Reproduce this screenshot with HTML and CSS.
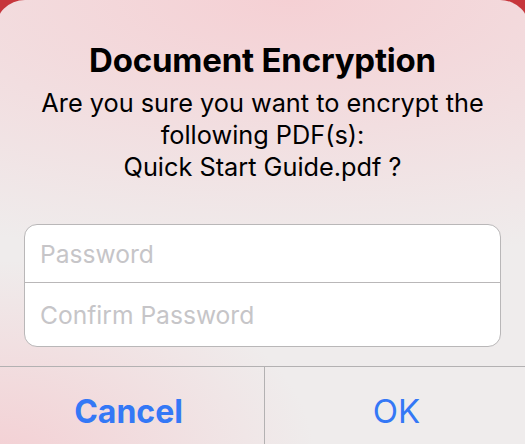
FILE: index.html
```html
<!DOCTYPE html>
<html lang="en">
<head>
<meta charset="utf-8">
<title>Document Encryption</title>
<link rel="stylesheet" href="styles.css">
</head>
<body>
<div class="alert">
  <div class="content">
    <h1 class="title">Document Encryption</h1>
    <p class="message">Are you sure you want to encrypt the following PDF(s):<br>Quick Start Guide.pdf ?</p>
  </div>
  <div class="fields">
    <div class="field"><span class="placeholder">Password</span></div>
    <div class="field"><span class="placeholder">Confirm Password</span></div>
  </div>
  <div class="actions">
    <div class="action action-cancel">Cancel</div>
    <div class="action action-ok">OK</div>
  </div>
</div>
</body>
</html>
```
FILE: styles.css
```css
html, body {
  margin: 0;
  padding: 0;
  height: 100%;
  overflow: hidden;
}
body {
  background: #c7363c;
  font-family: Inter, "Noto Sans", "Liberation Sans", sans-serif;
}
.alert {
  margin: 0 -5px;
  height: 460px;
  border-radius: 30px 30px 0 0;
  background:
    radial-gradient(ellipse 320px 200px at 0% 100%, rgba(244, 206, 210, 0.95), rgba(244, 206, 210, 0) 100%),
    radial-gradient(ellipse 700px 260px at 55% 0%, rgba(245, 208, 212, 1), rgba(245, 208, 212, 0) 100%),
    #efecec;
  display: flex;
  flex-direction: column;
  padding: 0 5px;
  box-sizing: border-box;
}
.content {
  padding-top: 40px;
  text-align: center;
  color: #000;
}
.title {
  margin: 0;
  font-size: 33px;
  line-height: 40px;
  font-weight: 700;
  letter-spacing: -0.2px;
}
.message {
  margin: 7px 10px 0;
  font-size: 25.3px;
  line-height: 32px;
  font-weight: 400;
}
.fields {
  margin: 41px 24px 0;
  background: #fff;
  border: 1px solid #b9b7b8;
  border-radius: 13px;
  overflow: hidden;
}
.field {
  height: 57px;
  display: flex;
  align-items: center;
  padding-left: 15px;
  font-size: 24.6px;
  color: #c6c5c8;
}
.field + .field {
  border-top: 1px solid #b9b7b8;
  height: 63px;
}
.actions {
  margin-top: 19px;
  border-top: 1px solid #b3b1b2;
  display: grid;
  grid-template-columns: 265px 1fr;
  height: 88px;
}
.action {
  display: flex;
  align-items: center;
  justify-content: center;
  font-size: 33px;
  color: #3478f6;
}
.action-cancel {
  font-weight: 700;
  font-size: 32px;
  border-right: 1px solid #b3b1b2;
  padding-right: 7px;
  box-sizing: border-box;
}
.action-ok {
  padding-left: 3px;
}
```
